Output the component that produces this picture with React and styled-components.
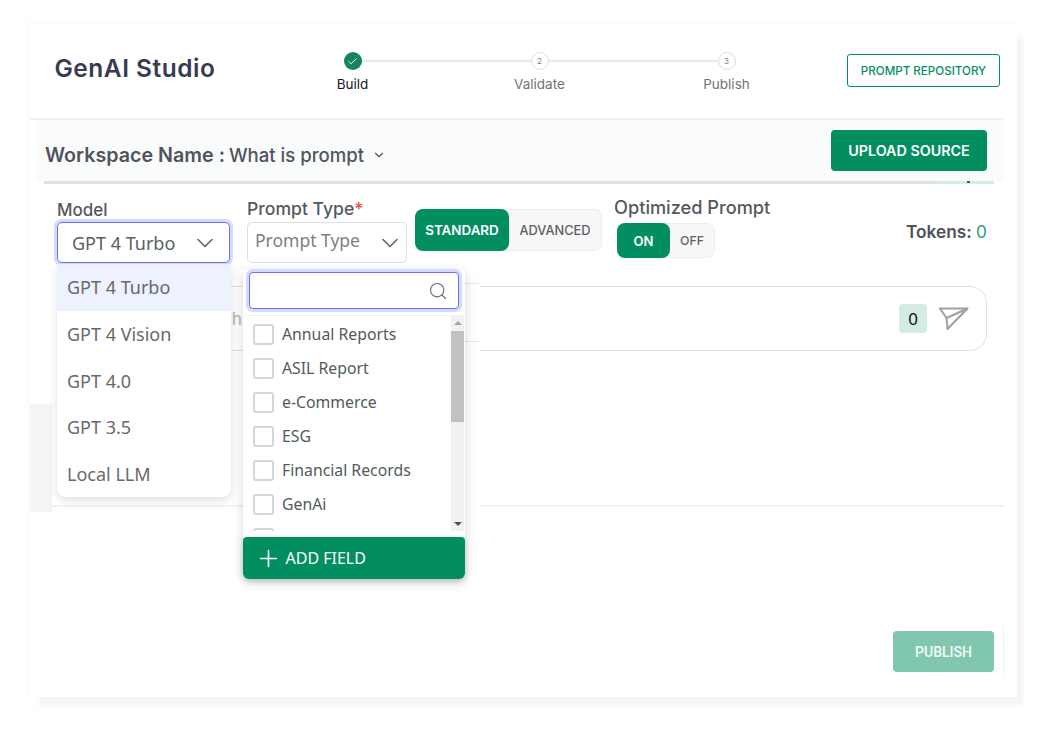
import React from 'react'
import styled, { createGlobalStyle } from 'styled-components'
import { Check, ChevronDown, Plus, Search } from 'lucide-react'

const green = '#038e62'
const display = '"Inter", "Open Sans", sans-serif'
const body = '"Noto Sans", "Open Sans", sans-serif'

const GlobalStyle = createGlobalStyle`
  html, body {
    margin: 0;
    background: #fff;
    font-family: ${display};
  }
  * {
    box-sizing: border-box;
  }
`

const Page = styled.div`
  width: 1047px;
  height: 734px;
  padding: 24px 0 0 30px;
  overflow: hidden;
`

const Card = styled.div`
  width: 987px;
  height: 673px;
  background: #fff;
  box-shadow: 7px 10px 5px -1px rgba(0, 0, 0, .045), -3px -2px 5px rgba(0, 0, 0, .025);
  border-radius: 2px;
`

const Header = styled.header`
  display: flex;
  align-items: flex-start;
  height: 96px;
  padding: 0 4px 0 25px;
  border-bottom: 2px solid #f1f3f3;
  margin-right: 13px;
`

const Title = styled.h1`
  width: 204px;
  margin: 26px 0 0 -0.5px;
  font-size: 24.5px;
  line-height: 36px;
  font-weight: 600;
  color: #393b50;
  letter-spacing: .5px;
`

const Stepper = styled.div`
  display: flex;
  margin: 28px 0 0 0.5px;
`

const Step = styled.div`
  position: relative;
  display: flex;
  flex-direction: column;
  align-items: center;
  width: 187px;
  &:not(:last-child)::after {
    content: '';
    position: absolute;
    top: 8px;
    left: 50%;
    width: 100%;
    height: 2px;
    background: #e9eaea;
  }
`

const Dot = styled.div`
  position: relative;
  z-index: 1;
  display: flex;
  align-items: center;
  justify-content: center;
  width: 18px;
  height: 18px;
  border-radius: 50%;
  font-size: 8px;
  color: #7d8185;
  background: ${p => (p.$done ? '#14865a' : '#fff')};
  border: ${p => (p.$done ? 'none' : '1px solid #dcdedf')};
`

const StepLabel = styled.div`
  margin-top: 6px;
  font-size: 13.5px;
  line-height: 16px;
  color: ${p => (p.$active ? '#17181a' : '#6f7378')};
`

const OutlineButton = styled.button`
  width: 153px;
  height: 33px;
  margin: 30px 0 0 auto;
  padding: 0;
  background: #fff;
  border: 1px solid ${green};
  border-radius: 3px;
  color: ${green};
  font: 500 11.6px ${display};
`

const WorkspaceBar = styled.div`
  display: flex;
  align-items: center;
  justify-content: space-between;
  height: 61px;
  margin: 0 13px 0 6px;
  padding: 0 17px 0 9px;
  background: #fafcfb;
`

const WorkspaceTitle = styled.div`
  display: flex;
  align-items: center;
  margin-top: 9px;
  color: #51545e;
  svg {
    margin-left: 8px;
  }
`

const WorkspaceLabel = styled.span`
  margin-right: 4px;
  font-weight: 600;
  font-size: 19.7px;
`

const WorkspaceValue = styled.span`
  font-weight: 500;
  font-size: 18.6px;
`

const SolidButton = styled.button`
  width: 156px;
  height: 41px;
  padding: 0;
  background: ${green};
  border: none;
  border-radius: 4px;
  color: #fff;
  font: 600 14.3px ${display};
`

const Strip = styled.div`
  display: flex;
  height: 3px;
  margin: 0 23px 0 14px;
  background: #dfe2e4;
`

const StripEnd = styled.div`
  position: relative;
  width: 56px;
  margin-left: auto;
  background: #d5ede3;
  &::after {
    content: '';
    position: absolute;
    top: 0;
    left: 29px;
    width: 3px;
    height: 2px;
    background: #1f6f55;
  }
`

const Controls = styled.div`
  display: flex;
  align-items: flex-start;
  height: 102px;
  padding: 0 30px 0 27px;
`

const Field = styled.div`
  position: relative;
  width: ${p => p.$width}px;
  margin-left: ${p => p.$left || 0}px;
  padding-top: ${p => p.$top}px;
`

const Label = styled.div`
  font-size: ${p => p.$size}px;
  line-height: 20px;
  font-weight: 500;
  color: #55585f;
  white-space: nowrap;
`

const Star = styled.span`
  color: #d9534f;
`

const Select = styled.div`
  display: flex;
  align-items: center;
  justify-content: space-between;
  height: 41px;
  margin-top: ${p => p.$top}px;
  padding: ${p => (p.$focus ? '0 10px 0 14px' : '0 2px 0 7px')};
  border-radius: 5px;
  font: ${p => (p.$focus ? 18 : 17.5)}px ${body};
  color: ${p => (p.$focus ? '#5a5f63' : '#7b7f85')};
  background: #fff;
  border: 1px solid ${p => (p.$focus ? '#6d72ee' : '#dcdfe0')};
  box-shadow: ${p => (p.$focus ? '0 0 0 3px #d3dafd' : 'none')};
  white-space: nowrap;
  svg {
    color: #60656a;
    flex: none;
  }
`

const Placeholder = styled.span`
  margin-bottom: 5px;
`

const Segmented = styled.div`
  display: flex;
  align-items: center;
  width: ${p => p.$width}px;
  height: ${p => p.$height}px;
  margin-top: ${p => p.$top}px;
  margin-left: ${p => p.$left}px;
  background: #f8f8f8;
  border: 1px solid #ececec;
  border-radius: 8px;
`

const SegOn = styled.div`
  display: flex;
  align-items: center;
  justify-content: center;
  flex: none;
  align-self: stretch;
  width: ${p => p.$width}px;
  margin: -1px 0 -1px -1px;
  background: ${green};
  border-radius: 8px;
  color: #fff;
  font: 600 ${p => p.$size}px ${display};
`

const SegOff = styled.div`
  flex: 1;
  text-align: center;
  color: #5d6066;
  font: 500 ${p => p.$size}px ${display};
`

const Tokens = styled.div`
  margin: 38px 0 0 auto;
  font-size: 17.3px;
  line-height: 20px;
  font-weight: 600;
  color: #50535c;
`

const TokenCount = styled.span`
  font-weight: 400;
  color: #2f9c76;
`

const ModelMenu = styled.ul`
  position: absolute;
  z-index: 3;
  top: 100%;
  left: 0;
  width: 174px;
  margin: 1px 0 0;
  padding: 0;
  list-style: none;
  background: #fff;
  border-radius: 0 0 9px 9px;
  box-shadow: 0 4px 10px rgba(0, 0, 0, .12);
  overflow: hidden;
`

const ModelItem = styled.li`
  display: flex;
  align-items: center;
  height: 46.7px;
  padding-left: 10px;
  font: 18px ${body};
  color: #666a6e;
  background: ${p => (p.$active ? '#eef2ff' : '#fff')};
`

const PanelPatch = styled.div`
  position: absolute;
  z-index: 1;
  top: 86px;
  left: 218px;
  width: 15px;
  height: 320px;
  background: #fff;
  &::before, &::after {
    content: '';
    position: absolute;
    left: 0;
    right: 0;
    height: 1px;
    background: #e6e6e6;
  }
  &::before {
    top: 13px;
  }
  &::after {
    top: 71px;
  }
`

const TypePanel = styled.div`
  position: absolute;
  z-index: 2;
  top: 86px;
  left: -4px;
  width: 222px;
  height: 309px;
  background: #fff;
  border-radius: 0 0 6px 6px;
  box-shadow: 0 3px 12px rgba(0, 0, 0, .16);
`

const SearchBox = styled.div`
  display: flex;
  align-items: center;
  justify-content: flex-end;
  height: 37px;
  margin: 2px 6px 0;
  padding-right: 10px;
  background: #fff;
  border: 1px solid #6d72ee;
  border-radius: 4px;
  box-shadow: 0 0 0 3px #d3dafd;
  svg {
    color: #666a6e;
  }
`

const TypeList = styled.div`
  display: flex;
  height: 216px;
  margin-top: 6px;
  border-top: 1px solid #f0f0f0;
`

const Rows = styled.div`
  flex: 1;
  height: 100%;
  overflow: hidden;
  padding-top: 1px;
`

const Row = styled.div`
  display: flex;
  align-items: center;
  gap: 8px;
  height: 34px;
  padding-left: 10px;
  font: 15.8px ${body};
  color: #4f5b5b;
`

const Box = styled.span`
  width: 21px;
  height: 21px;
  background: #fff;
  border: 2px solid #d2d7d7;
  border-radius: 3px;
`

const Scrollbar = styled.div`
  display: flex;
  flex-direction: column;
  align-items: center;
  justify-content: space-between;
  width: 13px;
  margin-right: 1px;
  padding: 5px 0;
  background: #f1f1f1;
`

const Thumb = styled.div`
  width: 100%;
  height: 91px;
  margin: 1px 0 auto;
  background: #c1c1c1;
`

const Arrow = styled.div`
  flex: none;
  width: 0;
  height: 0;
  margin-bottom: ${p => (p.$up ? '5px' : '0')};
  border-left: 4px solid transparent;
  border-right: 4px solid transparent;
  border-top: ${p => (p.$up ? 'none' : '4px solid #505050')};
  border-bottom: ${p => (p.$up ? '4px solid #a3a3a3' : 'none')};
`

const AddField = styled.button`
  display: flex;
  align-items: center;
  gap: 4px;
  width: 100%;
  height: 42px;
  margin-top: 6px;
  padding: 0 0 0 11.5px;
  background: ${green};
  border: none;
  border-radius: 4px 4px 6px 6px;
  color: #fff;
  font: 16px ${body};
  box-shadow: 0 2px 6px rgba(0, 0, 0, .18);
`

const PromptBox = styled.div`
  display: flex;
  align-items: center;
  height: 65px;
  margin: 0 30px 0 27px;
  padding-right: 17px;
  border: 1px solid #e2e2e2;
  border-radius: 17px;
`

const PromptText = styled.div`
  width: 184px;
  font-size: 17px;
  font-weight: 500;
  text-align: right;
  color: #b9bcbc;
  white-space: nowrap;
  overflow: hidden;
`

const Counter = styled.div`
  display: flex;
  align-items: center;
  justify-content: center;
  width: 28px;
  height: 29px;
  margin-left: auto;
  background: #d5ece3;
  border-radius: 4px;
  font: 17px ${body};
  color: #111;
`

const SendIcon = styled.svg`
  width: 30px;
  height: 23px;
  margin-left: 12px;
`

const Lower = styled.div`
  display: flex;
  align-items: flex-end;
  height: 161px;
`

const SideTab = styled.div`
  width: 22px;
  height: 108px;
  background: #f2f5f4;
`

const Rule = styled.div`
  flex: 1;
  height: 2px;
  margin: 0 13px 5px 0;
  background: #f2f2f2;
`

const Footer = styled.footer`
  display: flex;
  justify-content: flex-end;
  height: 53px;
  margin: 113px 13px 0 0;
  padding: 6px 9px 0 0;
  border-right: 1px solid #f2f2f2;
`

const PublishButton = styled.button`
  width: 101px;
  height: 41px;
  padding: 0;
  background: #81c7ae;
  border: none;
  border-radius: 4px;
  color: #f4fbf8;
  font: 500 14px Roboto, sans-serif;
`

const models = ['GPT 4 Turbo', 'GPT 4 Vision', 'GPT 4.0', 'GPT 3.5', 'Local LLM']
const promptTypes = ['Annual Reports', 'ASIL Report', 'e-Commerce', 'ESG', 'Financial Records', 'GenAi', 'Generic']
const steps = ['Build', 'Validate', 'Publish']

const App = () => {
  return (
    <Page>
      <GlobalStyle />
      <Card>
        <Header>
          <Title>GenAI Studio</Title>
          <Stepper>
            {steps.map((step, i) => (
              <Step key={step}>
                <Dot $done={i === 0}>
                  {i === 0 ? <Check size={11} color="#fff" strokeWidth={2} /> : i + 1}
                </Dot>
                <StepLabel $active={i === 0}>{step}</StepLabel>
              </Step>
            ))}
          </Stepper>
          <OutlineButton>PROMPT REPOSITORY</OutlineButton>
        </Header>

        <WorkspaceBar>
          <WorkspaceTitle>
            <WorkspaceLabel>Workspace Name :</WorkspaceLabel>
            <WorkspaceValue>What is prompt</WorkspaceValue>
            <ChevronDown size={14} />
          </WorkspaceTitle>
          <SolidButton>UPLOAD SOURCE</SolidButton>
        </WorkspaceBar>
        <Strip>
          <StripEnd />
        </Strip>

        <Controls>
          <Field $width={173} $top={16}>
            <Label $size={17}>Model</Label>
            <Select $top={2} $focus>
              GPT 4 Turbo
              <ChevronDown size={28} strokeWidth={1.4} />
            </Select>
            <ModelMenu>
              {models.map((model, i) => (
                <ModelItem key={model} $active={i === 0}>{model}</ModelItem>
              ))}
            </ModelMenu>
          </Field>

          <Field $width={160} $left={17} $top={15}>
            <Label $size={17.6}>
              Prompt Type<Star>*</Star>
            </Label>
            <Select $top={3}>
              <Placeholder>Prompt Type</Placeholder>
              <ChevronDown size={28} strokeWidth={1.4} />
            </Select>
            <PanelPatch />
            <TypePanel>
              <SearchBox>
                <Search size={20} strokeWidth={1.4} />
              </SearchBox>
              <TypeList>
                <Rows>
                  {promptTypes.map(type => (
                    <Row key={type}>
                      <Box />
                      {type}
                    </Row>
                  ))}
                </Rows>
                <Scrollbar>
                  <Arrow $up />
                  <Thumb />
                  <Arrow />
                </Scrollbar>
              </TypeList>
              <AddField>
                <Plus size={27} strokeWidth={1.4} />
                ADD FIELD
              </AddField>
            </TypePanel>
          </Field>

          <Segmented $width={187} $height={42} $top={25} $left={8}>
            <SegOn $width={94} $size={13.4}>STANDARD</SegOn>
            <SegOff $size={12.8}>ADVANCED</SegOff>
          </Segmented>

          <Field $width={170} $left={12} $top={13}>
            <Label $size={18.2}>Optimized Prompt</Label>
            <Segmented $width={98} $height={35} $top={6} $left={3}>
              <SegOn $width={53} $size={13}>ON</SegOn>
              <SegOff $size={12.3}>OFF</SegOff>
            </Segmented>
          </Field>

          <Tokens>
            Tokens: <TokenCount>0</TokenCount>
          </Tokens>
        </Controls>

        <PromptBox>
          <PromptText>Search</PromptText>
          <Counter>0</Counter>
          <SendIcon viewBox="0 0 30 23" fill="none" stroke="#a0a0a0" strokeWidth="2" strokeLinejoin="round">
            <path d="M1 1.5 H28.5 L8.5 22 L7.5 11 Z" />
            <path d="M7.5 11 L28.5 1.5" />
          </SendIcon>
        </PromptBox>

        <Lower>
          <SideTab />
          <Rule />
        </Lower>

        <Footer>
          <PublishButton>PUBLISH</PublishButton>
        </Footer>
      </Card>
    </Page>
  )
}

export default App
